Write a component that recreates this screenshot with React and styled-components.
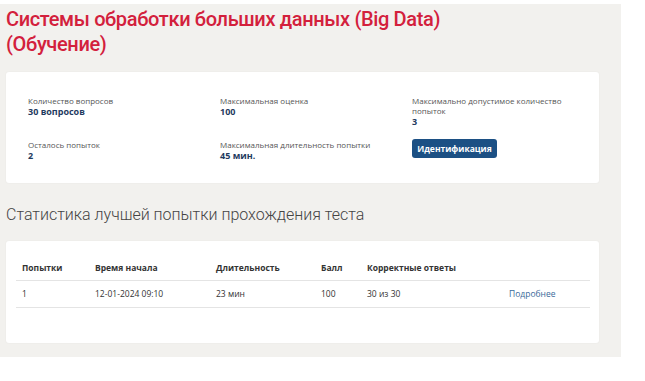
import React from "react";
import styled, { createGlobalStyle } from "styled-components";

const Global = createGlobalStyle`
  html, body { margin: 0; padding: 0; background: #ffffff; }
  body { font-family: "Open Sans", "Liberation Sans", sans-serif; }
`;

const Page = styled.div`
  width: 621px;
  margin-top: 4px;
  background: #f2f1ee;
  padding: 3px 22px 14px 6px;
  box-sizing: border-box;
`;

const Title = styled.h1`
  margin: 0 0 15px 0;
  font-family: Roboto, "Noto Sans", sans-serif;
  font-weight: 500;
  font-size: 20px;
  line-height: 25px;
  color: #d3203c;
  letter-spacing: -0.35px;
`;

const Card = styled.div`
  background: #ffffff;
  border-radius: 3px;
  box-shadow: 0 0 2px rgba(0, 0, 0, 0.05);
  padding: ${(p) => p.$pad};
`;

const InfoGrid = styled.div`
  display: grid;
  grid-template-columns: 192px 192px 160px;
  grid-template-rows: 44px auto;
`;

const Info = styled.div`
  display: flex;
  flex-direction: column;
`;

const Label = styled.div`
  font-size: 8px;
  line-height: 10px;
  color: #555555;
`;

const Value = styled.div`
  font-size: 9px;
  line-height: 11px;
  font-weight: 700;
  color: #1f3b60;
`;

const Button = styled.button`
  width: 85px;
  height: 19px;
  padding: 0;
  border: none;
  border-radius: 3px;
  background: #1c5084;
  color: #ffffff;
  font-family: "Open Sans", sans-serif;
  font-size: 8.5px;
  font-weight: 700;
  cursor: pointer;
  margin-top: -1px;
`;

const Heading = styled.h2`
  margin: 21px 0 15px 0;
  font-family: Roboto, "Noto Sans", sans-serif;
  font-weight: 300;
  font-size: 16px;
  line-height: 22px;
  color: #444444;
`;

const Table = styled.table`
  width: 574px;
  border-collapse: collapse;
  table-layout: fixed;
  font-size: 8.5px;
  color: #333333;
`;

const Th = styled.th`
  box-sizing: border-box;
  text-align: left;
  font-weight: 700;
  height: 25px;
  padding: 0 0 0 6px;
  border-bottom: 1px solid #e4e4e4;
  width: ${(p) => p.$w}px;
`;

const Td = styled.td`
  box-sizing: border-box;
  height: 27px;
  padding: 0 0 0 6px;
  border-bottom: 1px solid #e4e4e4;
`;

const Link = styled.a`
  color: #3a6a9a;
  text-decoration: none;
`;

const info = [
  { l: "Количество вопросов", v: "30 вопросов" },
  { l: "Максимальная оценка", v: "100" },
  { l: "Максимально допустимое количество попыток", v: "3" },
  { l: "Осталось попыток", v: "2" },
  { l: "Максимальная длительность попытки", v: "45 мин." },
];

const cols = [
  ["Попытки", 73],
  ["Время начала", 121],
  ["Длительность", 105],
  ["Балл", 46],
  ["Корректные ответы", 142],
  ["", 87],
];

export default function App() {
  return (
    <>
      <Global />
      <Page>
        <Title>
          Системы обработки больших данных (Big Data)
          <br />
          (Обучение)
        </Title>
        <Card $pad="24px 22px 22px 22px">
          <InfoGrid>
            {info.map((i) => (
              <Info key={i.l}>
                <Label>{i.l}</Label>
                <Value>{i.v}</Value>
              </Info>
            ))}
            <Info>
              <Button>Идентификация</Button>
            </Info>
          </InfoGrid>
        </Card>
        <Heading>Статистика лучшей попытки прохождения теста</Heading>
        <Card $pad="14px 9px 35px 10px">
          <Table>
            <thead>
              <tr>
                {cols.map(([c, w], i) => (
                  <Th key={i} $w={w}>
                    {c}
                  </Th>
                ))}
              </tr>
            </thead>
            <tbody>
              <tr>
                <Td>1</Td>
                <Td>12-01-2024 09:10</Td>
                <Td>23 мин</Td>
                <Td>100</Td>
                <Td>30 из 30</Td>
                <Td>
                  <Link href="#">Подробнее</Link>
                </Td>
              </tr>
            </tbody>
          </Table>
        </Card>
      </Page>
    </>
  );
}
